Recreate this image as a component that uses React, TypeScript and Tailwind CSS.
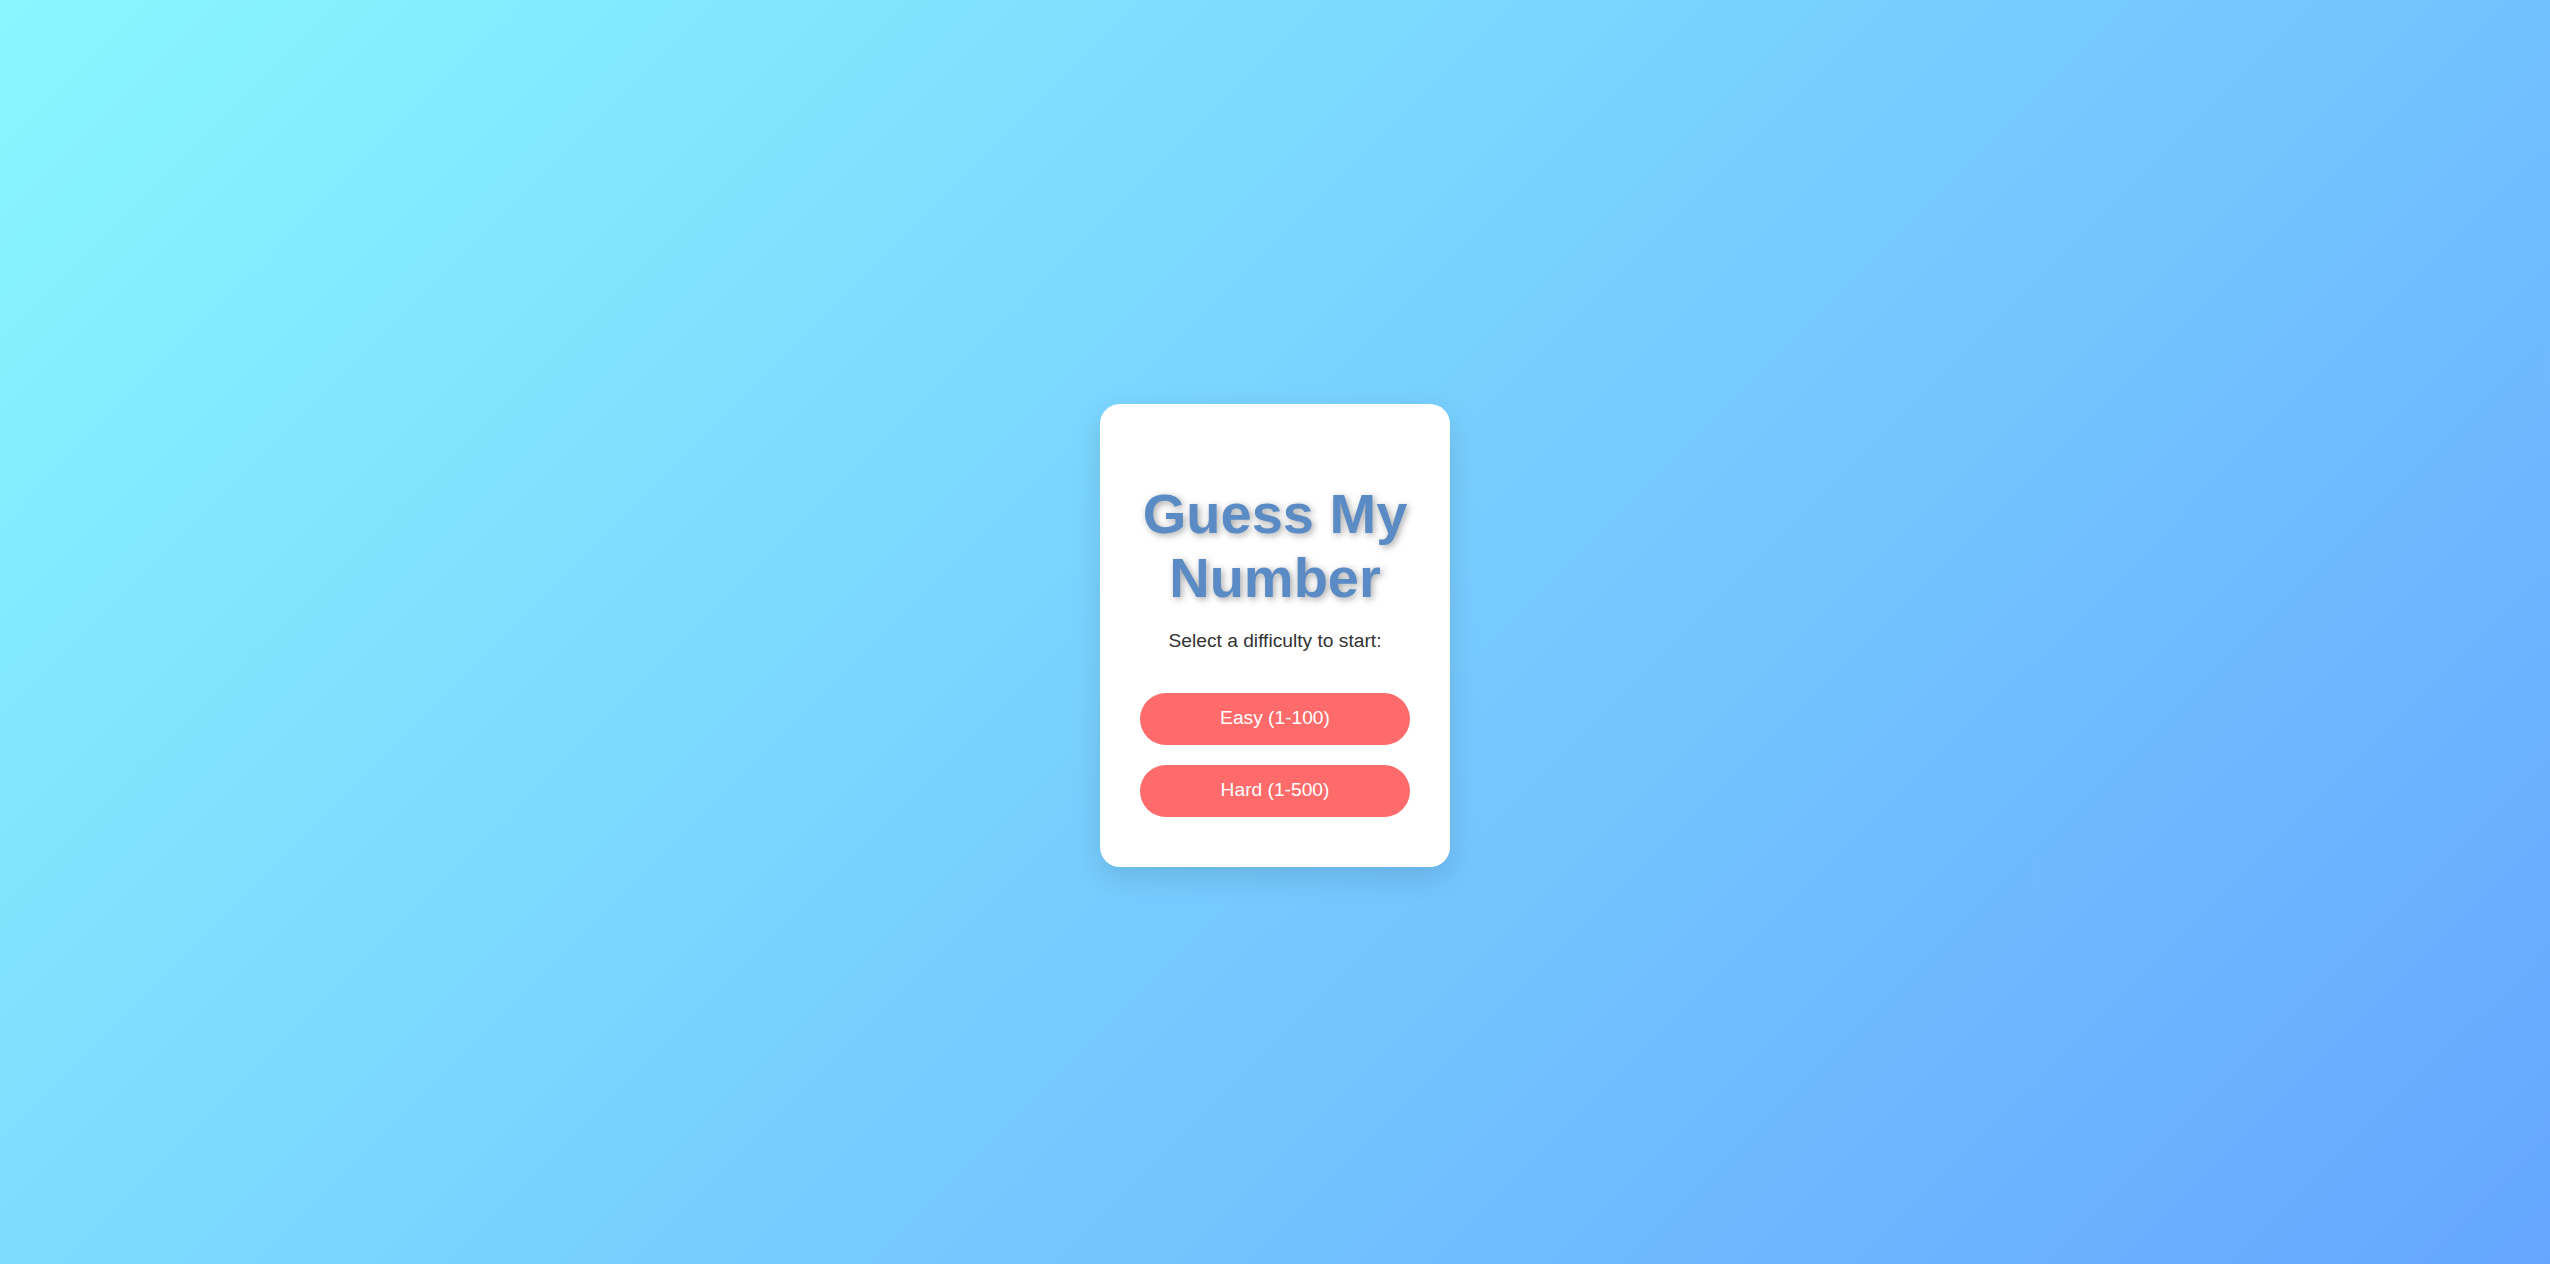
import React from "react";

const levels = [
    { id: 1, title: "Easy (1-100)" },
    { id: 2, title: "Hard (1-500)" },
];

const App = () => {
    return <div className="w-full h-screen flex items-center justify-center bg-[linear-gradient(135deg,#89f7fe_0%,#66a6ff_100%)] font-['Liberation_Sans',Arial,sans-serif]">
        <div className="mt-[7px] w-[350px] bg-white rounded-[20px] p-10 flex flex-col items-center text-center shadow-[0_10px_30px_rgba(0,0,0,0.12)]">
            <h1 className="mt-[38px] text-[56px] leading-[1.149] font-bold text-[#5a8bc4] [text-shadow:2px_2px_7px_rgba(0,0,0,0.35)]">Guess My Number</h1>
            <p className="mt-[19px] text-[19.2px] leading-[1.149] text-[#333]">Select a difficulty to start:</p>
            <div className="mt-[41px] mb-[10px] w-full flex flex-col gap-5">
                {
                    levels.map((level) => (
                        <button key={level.id} className="w-full h-[52px] rounded-full bg-[#ff6b6b] text-white text-[19.2px] cursor-pointer">{level.title}</button>
                    ))
                }
            </div>
        </div>
    </div>;
};

export default App;
